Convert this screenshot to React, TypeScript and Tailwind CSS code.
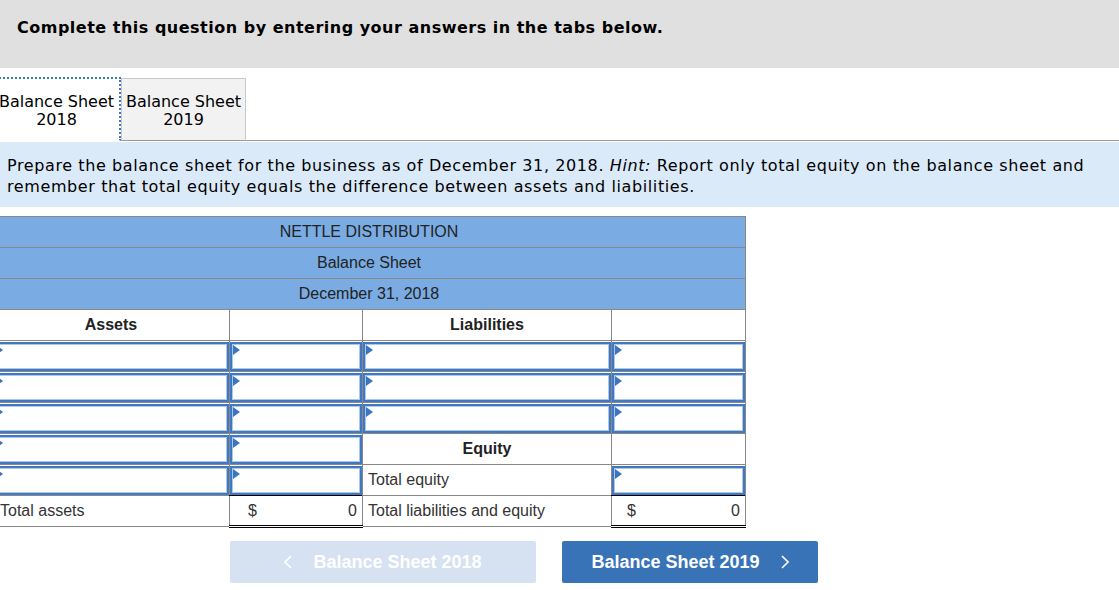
import React from 'react';

const verdana = { fontFamily: '"DejaVu Sans", Verdana, sans-serif' };
const arial = { fontFamily: '"Liberation Sans", Arial, sans-serif' };

function Marker() {
    return (
        <span className="absolute left-[1px] top-[1px] w-0 h-0 border-y-[5px] border-y-transparent border-l-[7px] border-l-[#3b74c0]" />
    );
}

function InputBox() {
    return (
        <div className="relative h-[29px] w-full bg-white border-2 border-[#4178c0] shadow-[inset_0_0_0_1px_#aac7ec]">
            <Marker />
        </div>
    );
}

function InputCell() {
    return (
        <td className="p-0 border border-[#888] bg-white align-middle">
            <InputBox />
        </td>
    );
}

type Row = ('in' | 'empty' | 'equity' | 'totalEquity')[];

const rows: Row[] = [
    ['in', 'in', 'in', 'in'],
    ['in', 'in', 'in', 'in'],
    ['in', 'in', 'in', 'in'],
    ['in', 'in', 'equity', 'empty'],
    ['in', 'in', 'totalEquity', 'in'],
];

export default function App() {
    return (
        <div className="w-[1119px] h-[590px] bg-white overflow-hidden text-[#1a1a1a]">
            {/* header */}
            <div className="h-[68px] bg-[#e0e0e0] pl-[17px] pt-[17px]">
                <h1 className="text-[16px] leading-[22px] font-bold text-black tracking-[0.5px]" style={verdana}>
                    Complete this question by entering your answers in the tabs below.
                </h1>
            </div>

            {/* tabs */}
            <div className="mt-[9px] flex items-end h-[64px] -ml-[6px]" style={verdana}>
                <div className="w-[127px] h-[64px] bg-white border-t-2 border-r-2 border-dotted border-[#3b74c0] border-b border-b-white flex flex-col items-center justify-center text-[16px] leading-[18px] text-black pt-[3px]">
                    <span>Balance Sheet</span>
                    <span>2018</span>
                </div>
                <div className="w-[125px] h-[63px] bg-[#f2f2f2] border border-[#c8c8c8] border-b-[#999] flex flex-col items-center justify-center text-[16px] leading-[18px] text-black pt-[2px]">
                    <span>Balance Sheet</span>
                    <span>2019</span>
                </div>
                <div className="flex-1 h-[1px] bg-[#999]" />
            </div>

            {/* hint */}
            <div className="mt-[1px] h-[65px] bg-[#dbeaf8] pl-[7px] pt-[13px] text-[16px] leading-[21px] text-black tracking-[0.6px]" style={verdana}>
                Prepare the balance sheet for the business as of December 31, 2018. <em>Hint:</em> Report only total equity on the balance sheet and
                <br />
                remember that total equity equals the difference between assets and liabilities.
            </div>

            {/* balance sheet */}
            <div className="mt-[9px] -ml-[8px]" style={arial}>
                <table className="w-[753px] table-fixed border-collapse text-[16px] text-[#222]">
                    <colgroup>
                        <col className="w-[237px]" />
                        <col className="w-[133px]" />
                        <col className="w-[249px]" />
                        <col className="w-[134px]" />
                    </colgroup>
                    <tbody>
                        {['NETTLE DISTRIBUTION', 'Balance Sheet', 'December 31, 2018'].map((t) => (
                            <tr key={t} className="h-[31px]">
                                <td colSpan={4} className="border border-[#888] bg-[#7aace3] text-center p-0">
                                    {t}
                                </td>
                            </tr>
                        ))}
                        <tr className="h-[31px]">
                            <td className="border border-[#888] text-center font-bold p-0">Assets</td>
                            <td className="border border-[#888] p-0" />
                            <td className="border border-[#888] text-center font-bold p-0">Liabilities</td>
                            <td className="border border-[#888] p-0" />
                        </tr>
                        {rows.map((r, i) => (
                            <tr key={i} className="h-[31px]">
                                {r.map((c, j) => {
                                    if (c === 'in') return <InputCell key={j} />;
                                    if (c === 'equity')
                                        return (
                                            <td key={j} className="border border-[#888] text-center font-bold p-0">
                                                Equity
                                            </td>
                                        );
                                    if (c === 'totalEquity')
                                        return (
                                            <td key={j} className="border border-[#888] pl-[5px] py-0 text-[#333]">
                                                Total equity
                                            </td>
                                        );
                                    return <td key={j} className="border border-[#888] p-0" />;
                                })}
                            </tr>
                        ))}
                        <tr className="h-[31px] text-[#333]">
                            <td className="border border-[#888] pl-[7px] py-0">Total assets</td>
                            <td className="border-x border-x-[#888] border-t border-t-black border-b-[3px] border-b-black border-double p-0">
                                <div className="flex justify-between pl-[18px] pr-[5px]">
                                    <span>$</span>
                                    <span>0</span>
                                </div>
                            </td>
                            <td className="border border-[#888] pl-[5px] py-0">Total liabilities and equity</td>
                            <td className="border-x border-x-[#888] border-t border-t-black border-b-[3px] border-b-black border-double p-0">
                                <div className="flex justify-between pl-[15px] pr-[5px]">
                                    <span>$</span>
                                    <span>0</span>
                                </div>
                            </td>
                        </tr>
                    </tbody>
                </table>
            </div>

            {/* nav buttons */}
            <div className="mt-[13px] ml-[230px] flex gap-[26px]" style={arial}>
                <button className="w-[306px] h-[42px] rounded-[2px] bg-[#d6e2f1] text-white font-bold text-[18px] flex items-center justify-center gap-[21px]">
                    <svg width="8" height="14" viewBox="0 0 8 14" fill="none" stroke="white" strokeWidth="1.6">
                        <polyline points="7,1 1,7 7,13" />
                    </svg>
                    <span>Balance Sheet 2018</span>
                </button>
                <button className="w-[256px] h-[42px] rounded-[2px] bg-[#3873b8] text-white font-bold text-[18px] flex items-center justify-center gap-[21px]">
                    <span>Balance Sheet 2019</span>
                    <svg width="8" height="14" viewBox="0 0 8 14" fill="none" stroke="white" strokeWidth="1.6">
                        <polyline points="1,1 7,7 1,13" />
                    </svg>
                </button>
            </div>
        </div>
    );
}
